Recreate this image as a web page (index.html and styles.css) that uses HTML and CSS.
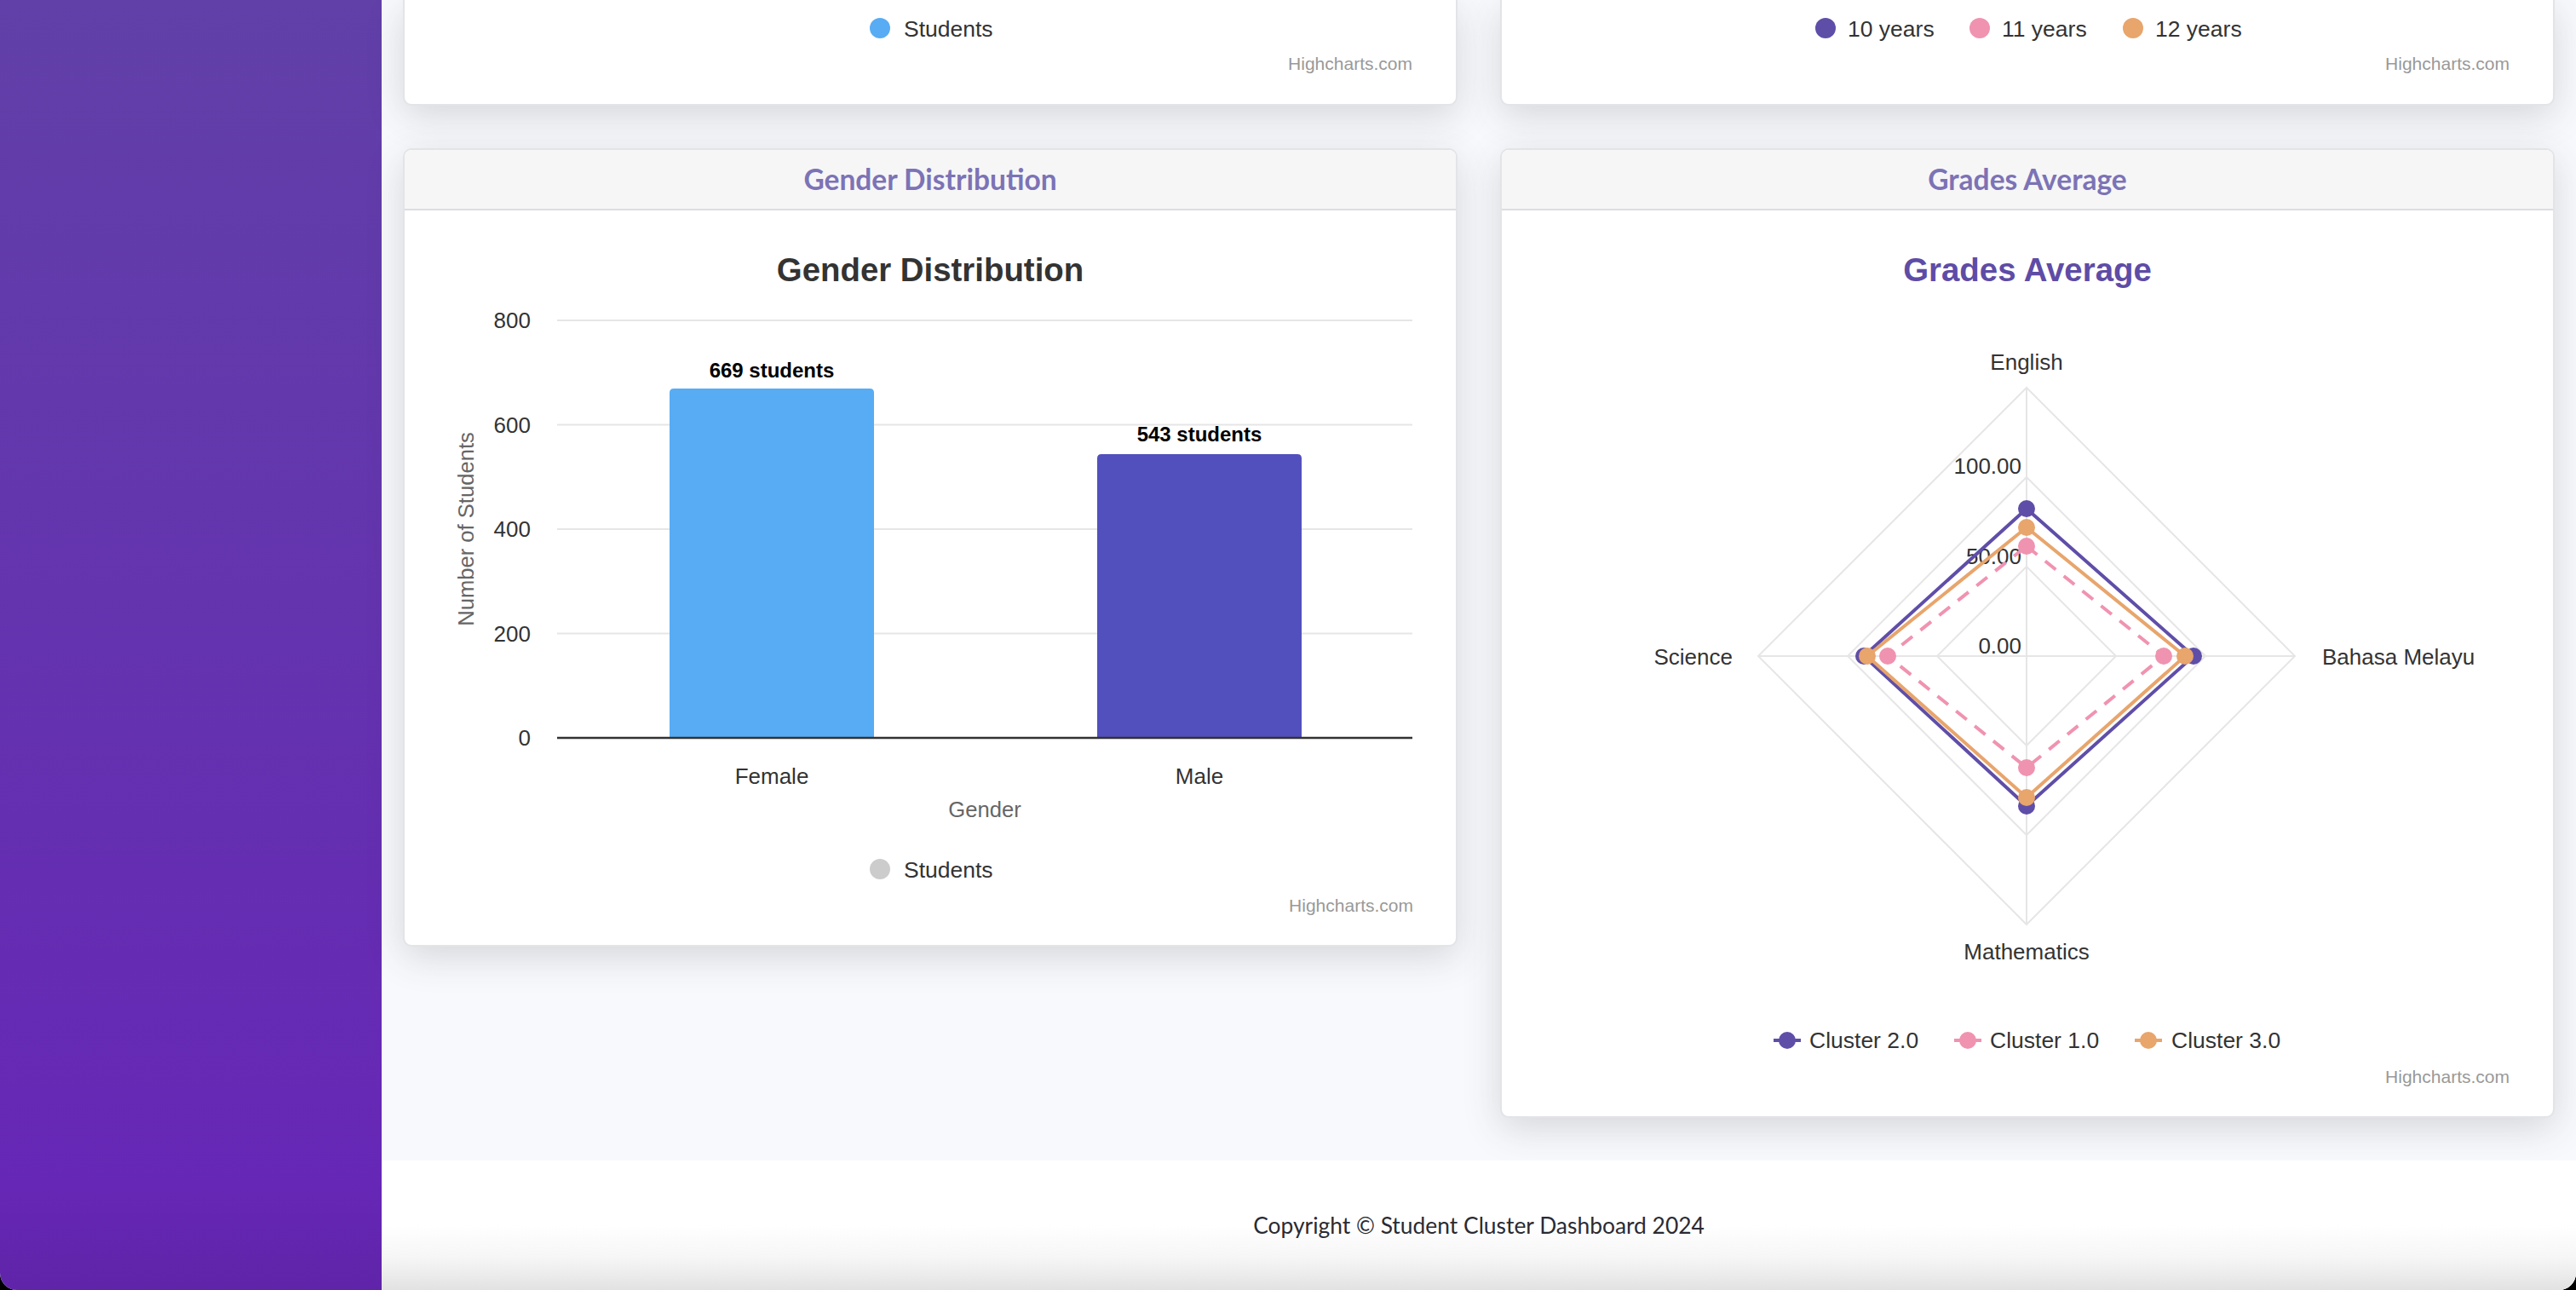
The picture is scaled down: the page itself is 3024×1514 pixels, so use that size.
FILE: index.html
```html
<!DOCTYPE html>
<html lang="en">
<head>
<meta charset="utf-8">
<title>Student Cluster Dashboard</title>
<link rel="stylesheet" href="styles.css">
</head>
<body>
<div class="window">
  <aside class="sidebar"></aside>
  <div class="content-wrapper">
    <main class="content">
      <div class="row row-cut">
        <div class="card card-cut">
          <svg class="chart" width="1234" height="122" viewBox="0 0 1234 122">
            <circle cx="558" cy="33" r="12" fill="#58acf4"/>
            <text class="hc-legend" x="586" y="43">Students</text>
            <text class="hc-credits" x="1183" y="82" text-anchor="end">Highcharts.com</text>
          </svg>
        </div>
        <div class="card card-cut">
          <svg class="chart" width="1234" height="122" viewBox="0 0 1234 122">
            <circle cx="380" cy="33" r="12" fill="#5f4ea8"/>
            <text class="hc-legend" x="406" y="43">10 years</text>
            <circle cx="561" cy="33" r="12" fill="#f093b0"/>
            <text class="hc-legend" x="587" y="43">11 years</text>
            <circle cx="741" cy="33" r="12" fill="#e8a56c"/>
            <text class="hc-legend" x="767" y="43">12 years</text>
            <text class="hc-credits" x="1183" y="82" text-anchor="end">Highcharts.com</text>
          </svg>
        </div>
      </div>

      <div class="row">
        <div class="card">
          <div class="card-header"><h6>Gender Distribution</h6></div>
          <div class="card-body">
            <svg class="chart" width="1234" height="862" viewBox="0 0 1234 862">
              <text class="hc-title" x="617" y="83" text-anchor="middle">Gender Distribution</text>
              <g class="grid">
                <path d="M179 129 H1183 M179 251.5 H1183 M179 374 H1183 M179 496.5 H1183"/>
              </g>
              <path d="M311 619 V214 Q311 209 316 209 H546 Q551 209 551 214 V619 Z" fill="#58acf4"/>
              <path d="M813 619 V291 Q813 286 818 286 H1048 Q1053 286 1053 291 V619 Z" fill="#5250bd"/>
              <path d="M179 619 H1183" stroke="#333333" stroke-width="2.5"/>
              <g class="hc-axis" text-anchor="end">
                <text x="148" y="138">800</text>
                <text x="148" y="260.5">600</text>
                <text x="148" y="383">400</text>
                <text x="148" y="505.5">200</text>
                <text x="148" y="628">0</text>
              </g>
              <text class="hc-axis-title" x="81" y="374" text-anchor="middle" transform="rotate(-90 81 374)">Number of Students</text>
              <text class="hc-label" x="431" y="196" text-anchor="middle">669 students</text>
              <text class="hc-label" x="933" y="271" text-anchor="middle">543 students</text>
              <g class="hc-axis" text-anchor="middle">
                <text x="431" y="673">Female</text>
                <text x="933" y="673">Male</text>
              </g>
              <text class="hc-axis-title" x="681" y="712" text-anchor="middle">Gender</text>
              <circle cx="558" cy="773" r="12" fill="#cccccc"/>
              <text class="hc-legend" x="586" y="783">Students</text>
              <text class="hc-credits" x="1184" y="823" text-anchor="end">Highcharts.com</text>
            </svg>
          </div>
        </div>

        <div class="card">
          <div class="card-header"><h6>Grades Average</h6></div>
          <div class="card-body">
            <svg class="chart" width="1234" height="1063" viewBox="0 0 1234 1063">
              <text class="hc-title hc-title-purple" x="617" y="83" text-anchor="middle">Grades Average</text>
              <g class="grid">
                <path d="M616 418 L721 523 L616 628 L511 523 Z"/>
                <path d="M616 313 L826 523 L616 733 L406 523 Z"/>
                <path d="M616 208 L931 523 L616 838 L301 523 Z"/>
                <path d="M616 523 V208 M616 523 H931 M616 523 V838 M616 523 H301"/>
              </g>
              <g class="hc-axis" text-anchor="end">
                <text x="610" y="309">100.00</text>
                <text x="610" y="415">50.00</text>
                <text x="610" y="520">0.00</text>
              </g>
              <g class="hc-axis">
                <text x="616" y="187" text-anchor="middle">English</text>
                <text x="963" y="533">Bahasa Melayu</text>
                <text x="616" y="879" text-anchor="middle">Mathematics</text>
                <text x="271" y="533" text-anchor="end">Science</text>
              </g>
              <g class="series" stroke="#5f4ea8" fill="#5f4ea8">
                <path class="series-line" d="M616 350 L812 523 L616 699 L425 523 Z"/>
                <circle cx="616" cy="350" r="10"/>
                <circle cx="812" cy="523" r="10"/>
                <circle cx="616" cy="699" r="10"/>
                <circle cx="425" cy="523" r="10"/>
              </g>
              <g class="series" stroke="#f093b0" fill="#f093b0">
                <path class="series-line dashed" d="M616 394 L777 523 L616 654 L453 523 Z"/>
                <circle cx="616" cy="394" r="10"/>
                <circle cx="777" cy="523" r="10"/>
                <circle cx="616" cy="654" r="10"/>
                <circle cx="453" cy="523" r="10"/>
              </g>
              <g class="series" stroke="#e8a56c" fill="#e8a56c">
                <path class="series-line" d="M616 372 L802 523 L616 689 L429 523 Z"/>
                <circle cx="616" cy="372" r="10"/>
                <circle cx="802" cy="523" r="10"/>
                <circle cx="616" cy="689" r="10"/>
                <circle cx="429" cy="523" r="10"/>
              </g>
              <g class="legend-item" stroke="#5f4ea8" fill="#5f4ea8">
                <path class="legend-line" d="M319 974 H351"/>
                <circle cx="335" cy="974" r="10"/>
              </g>
              <text class="hc-legend" x="361" y="983">Cluster 2.0</text>
              <g class="legend-item" stroke="#f093b0" fill="#f093b0">
                <path class="legend-line dashed" d="M531 974 H563"/>
                <circle cx="547" cy="974" r="10"/>
              </g>
              <text class="hc-legend" x="573" y="983">Cluster 1.0</text>
              <g class="legend-item" stroke="#e8a56c" fill="#e8a56c">
                <path class="legend-line" d="M743 974 H775"/>
                <circle cx="759" cy="974" r="10"/>
              </g>
              <text class="hc-legend" x="786" y="983">Cluster 3.0</text>
              <text class="hc-credits" x="1183" y="1024" text-anchor="end">Highcharts.com</text>
            </svg>
          </div>
        </div>
      </div>
    </main>
    <footer class="sticky-footer">
      <span class="copyright">Copyright © Student Cluster Dashboard 2024</span>
    </footer>
  </div>
</div>
</body>
</html>
```

FILE: styles.css
```css
html {
  background: #000000;
}

body {
  margin: 0;
  background: #000000;
}

.window {
  width: 3024px;
  height: 1514px;
  display: flex;
  overflow: hidden;
  border-radius: 0 0 20px 20px;
  background: #f8f9fc;
}

.sidebar {
  width: 448px;
  flex: 0 0 448px;
  background: linear-gradient(180deg, #6140a8 0%, #6433af 50%, #6627b6 92%, #5f24a8 100%);
}

.content-wrapper {
  flex: 1;
  display: flex;
  flex-direction: column;
  background: #f8f9fc;
}

.content {
  flex: 1;
  padding: 0 25px 50px;
  display: flex;
  flex-direction: column;
  gap: 50px;
}

.row {
  display: grid;
  grid-template-columns: 1238px 1238px;
  column-gap: 50px;
  align-items: start;
}

.card {
  background: #ffffff;
  border: 2px solid #e3e4e8;
  border-radius: 10px;
  box-shadow: 0 12px 44px rgba(58, 59, 69, 0.18);
  overflow: hidden;
}

.card-cut {
  height: 122px;
  border-top: none;
  border-radius: 0 0 10px 10px;
}

.card-header {
  height: 69px;
  display: flex;
  align-items: center;
  justify-content: center;
  background: #f6f6f7;
  border-bottom: 2px solid #dcdddf;
}

.card-header h6 {
  margin: 0;
  font-family: "Lato", "Noto Sans", sans-serif;
  font-weight: 700;
  font-size: 33.5px;
  color: #7c73b5;
  line-height: 1;
}

.card-body {
  display: block;
}

.chart {
  display: block;
  font-family: "Liberation Sans", Arial, sans-serif;
}

.hc-title {
  font-size: 38.4px;
  font-weight: 700;
  fill: #333333;
}

.hc-title-purple {
  fill: #5e4ca6;
}

.hc-axis {
  font-size: 26px;
  fill: #333333;
}

.hc-axis-title {
  font-size: 25.6px;
  fill: #666666;
}

.hc-label {
  font-size: 24px;
  font-weight: 700;
  fill: #000000;
}

.hc-legend {
  font-size: 26.5px;
  fill: #333333;
}

.hc-credits {
  font-size: 21px;
  fill: #999999;
}

.grid path {
  fill: none;
  stroke: #e6e6e6;
  stroke-width: 2;
}

.series-line {
  fill: none;
  stroke-width: 4;
  stroke-linejoin: round;
}

.series circle,
.legend-item circle {
  stroke: none;
}

.legend-line {
  fill: none;
  stroke-width: 4;
}

.dashed {
  stroke-dasharray: 16 12;
}

.legend-line.dashed {
  stroke-dasharray: 8 16;
}

.sticky-footer {
  height: 152px;
  flex: 0 0 152px;
  display: flex;
  align-items: center;
  justify-content: center;
  background: linear-gradient(180deg, #ffffff 0%, #ffffff 50%, #f6f6f6 75%, #e2e2e2 100%);
}

.copyright {
  font-family: "Lato", "Noto Sans", sans-serif;
  font-size: 26.4px;
  line-height: 1;
  color: #2a2b33;
}
```
